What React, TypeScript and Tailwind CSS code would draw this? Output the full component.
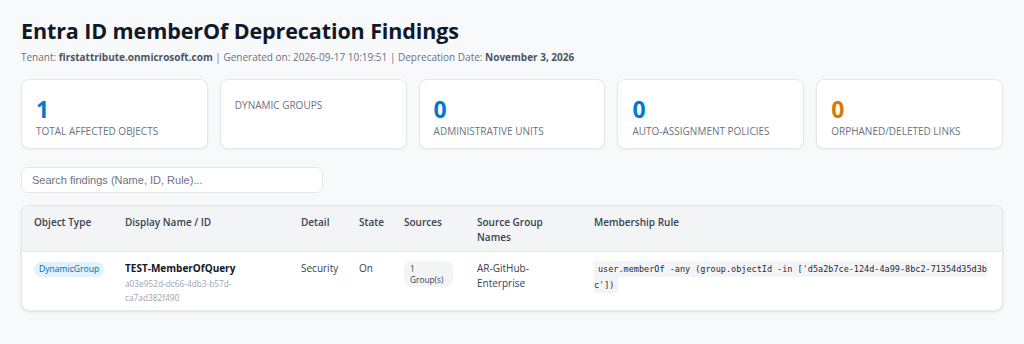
const stats = [
  { value: "1", label: "Total Affected Objects", color: "text-[#0078d4]" },
  { value: "", label: "Dynamic Groups", color: "text-[#0078d4]" },
  { value: "0", label: "Administrative Units", color: "text-[#0078d4]" },
  { value: "0", label: "Auto-Assignment Policies", color: "text-[#0078d4]" },
  { value: "0", label: "Orphaned/Deleted Links", color: "text-[#d97706]" },
];

const StatCard = ({ value, label, color }: { value: string; label: string; color: string }) => (
  <div className="h-[70px] rounded-lg border border-[#e5e7eb] bg-white px-[14px] pt-[17px] shadow-[0_1px_2px_rgba(0,0,0,0.05)]">
    {value && <div className={`text-[23px] font-bold leading-[24px] ${color}`}>{value}</div>}
    <div className={`text-[10px] uppercase leading-[14px] text-[#6b7280] ${value ? "mt-[3px]" : "mt-[1px]"}`}>
      {label}
    </div>
  </div>
);

export default function App() {
  return (
    <div className="min-h-[344px] bg-[#f8f9fb] px-[21px] pt-[16px] font-['Open_Sans','Noto_Sans',sans-serif] text-[#1f2937]">
      <h1 className="text-[21.5px] font-bold leading-[30px] tracking-[-0.1px] text-[#111827]">
        Entra ID memberOf Deprecation Findings
      </h1>
      <p className="mt-[3px] text-[10px] leading-[16px] text-[#6b7280]">
        Tenant: <b className="text-[#4b5563]">firstattribute.onmicrosoft.com</b> | Generated on: 2026-09-17 10:19:51 |
        Deprecation Date: <b className="text-[#4b5563]">November 3, 2026</b>
      </p>

      <div className="mt-[14px] grid grid-cols-5 gap-[12px]">
        {stats.map((s) => (
          <StatCard key={s.label} {...s} />
        ))}
      </div>

      <input
        className="mt-[18px] block h-[26px] w-[302px] rounded-md border border-[#e5e7eb] bg-white px-[10px] font-['Liberation_Sans',sans-serif] text-[11px] text-[#374151] outline-none placeholder:text-[#6b7280]"
        placeholder="Search findings (Name, ID, Rule)..."
      />

      <div className="mt-[12px] overflow-hidden rounded-lg border border-[#e5e7eb] bg-white shadow-[0_1px_3px_rgba(0,0,0,0.1)]">
        <table className="w-full table-fixed border-collapse text-left text-[10px]">
          <thead className="bg-[#f3f4f6] text-[#374151]">
            <tr className="h-[45px] border-b border-[#e5e7eb] align-top">
              <th className="w-[91px] px-[12px] pt-[9px] font-semibold leading-[15px]">Object Type</th>
              <th className="w-[176px] px-[12px] pt-[9px] font-semibold leading-[15px]">Display Name / ID</th>
              <th className="w-[58px] px-[12px] pt-[9px] font-semibold leading-[15px]">Detail</th>
              <th className="w-[45px] px-[12px] pt-[9px] font-semibold leading-[15px]">State</th>
              <th className="w-[73px] px-[12px] pt-[9px] font-semibold leading-[15px]">Sources</th>
              <th className="w-[117px] px-[12px] pt-[9px] font-semibold leading-[15px]">Source Group Names</th>
              <th className="px-[12px] pt-[9px] font-semibold leading-[15px]">Membership Rule</th>
            </tr>
          </thead>
          <tbody>
            <tr className="h-[59px] align-top text-[#374151]">
              <td className="px-[12px] pt-[9px]">
                <span className="inline-block rounded-full bg-[#e0f2fe] px-[5px] py-[1px] text-[8.6px] leading-[13px] text-[#0369a1]">
                  DynamicGroup
                </span>
              </td>
              <td className="px-[12px] pt-[9px]">
                <div className="font-bold leading-[15px] text-[#111827]">TEST-MemberOfQuery</div>
                <div className="mt-[1px] text-[8.3px] leading-[14px] text-[#9ca3af]">
                  a03e952d-dc66-4db3-b57d-
                  <br />
                  ca7ad382f490
                </div>
              </td>
              <td className="px-[12px] pt-[9px] leading-[15px]">Security</td>
              <td className="px-[12px] pt-[9px] leading-[15px]">On</td>
              <td className="px-[12px] pt-[9px]">
                <span className="inline-block w-[49px] rounded-lg bg-[#f3f4f6] px-[6px] py-[2px] text-[8.3px] leading-[11px] text-[#374151]">
                  1
                  <br />
                  Group(s)
                </span>
              </td>
              <td className="px-[12px] pt-[9px] leading-[15px]">
                AR-GitHub-
                <br />
                Enterprise
              </td>
              <td className="pl-[12px] pr-[14px] pt-[9px]">
                <code className="break-all bg-[#f3f4f6] px-[4px] py-[3px] font-['DejaVu_Sans_Mono',monospace] text-[8.5px] leading-[16px] text-[#1f2937]">
                  user.memberOf -any (group.objectId -in ['d5a2b7ce-124d-4a99-8bc2-71354d35d3bc'])
                </code>
              </td>
            </tr>
          </tbody>
        </table>
      </div>
    </div>
  );
}
